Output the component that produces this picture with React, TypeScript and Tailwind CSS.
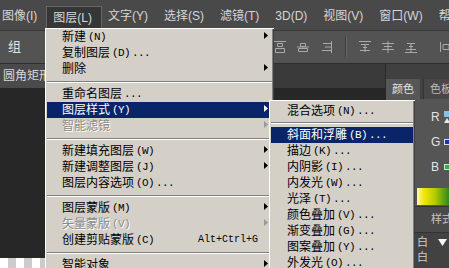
import React from 'react';

type Entry =
  | 'sep'
  | {
      label: string;
      hot?: string;
      dots?: boolean;
      arrow?: boolean;
      active?: boolean;
      disabled?: boolean;
      shortcut?: string;
    };

const layerMenu: Entry[] = [
  { label: '新建', hot: 'N', arrow: true },
  { label: '复制图层', hot: 'D', dots: true },
  { label: '删除', arrow: true },
  'sep',
  { label: '重命名图层', dots: true },
  { label: '图层样式', hot: 'Y', arrow: true, active: true },
  { label: '智能滤镜', arrow: true, disabled: true },
  'sep',
  { label: '新建填充图层', hot: 'W', arrow: true },
  { label: '新建调整图层', hot: 'J', arrow: true },
  { label: '图层内容选项', hot: 'O', dots: true },
  'sep',
  { label: '图层蒙版', hot: 'M', arrow: true },
  { label: '矢量蒙版', hot: 'V', arrow: true, disabled: true },
  { label: '创建剪贴蒙版', hot: 'C', shortcut: 'Alt+Ctrl+G' },
  'sep',
  { label: '智能对象', arrow: true },
];

const styleMenu: Entry[] = [
  { label: '混合选项', hot: 'N', dots: true },
  'sep',
  { label: '斜面和浮雕', hot: 'B', dots: true, active: true },
  { label: '描边', hot: 'K', dots: true },
  { label: '内阴影', hot: 'I', dots: true },
  { label: '内发光', hot: 'W', dots: true },
  { label: '光泽', hot: 'T', dots: true },
  { label: '颜色叠加', hot: 'V', dots: true },
  { label: '渐变叠加', hot: 'G', dots: true },
  { label: '图案叠加', hot: 'Y', dots: true },
  { label: '外发光', hot: 'O', dots: true },
];

const topMenu = ['图像(I)', '图层(L)', '文字(Y)', '选择(S)', '滤镜(T)', '3D(D)', '视图(V)', '窗口(W)', '帮助(H)'];

function Arrow({ fill }: { fill: string }) {
  return (
    <svg width="4" height="7" viewBox="0 0 4 7" className="absolute right-[4px] top-[3px]">
      <path d="M0 0L4 3.5L0 7Z" fill={fill} />
    </svg>
  );
}

function Row({ item, pad }: { item: Exclude<Entry, 'sep'>; pad: string }) {
  const tone = item.active
    ? 'bg-[#0a246a] text-white'
    : item.disabled
      ? 'text-[#8c8c8c] [text-shadow:1px_1px_0_#ffffff]'
      : 'text-black';
  const arrowFill = item.active ? '#ffffff' : item.disabled ? '#9a9a9a' : '#000000';
  return (
    <div className={`relative flex h-[16px] items-center whitespace-nowrap pr-[14px] ${pad} ${tone}`}>
      <span>{item.label}</span>
      {item.hot && (
        <span className="ml-[2px] font-['Liberation_Mono',monospace] text-[11px] tracking-[-0.6px]">
          ({item.hot})
        </span>
      )}
      {item.dots && (
        <span className="ml-[2px] font-['Liberation_Mono',monospace] text-[11px] tracking-[-0.6px]">...</span>
      )}
      {item.shortcut && (
        <span className="ml-auto font-['Liberation_Mono',monospace] text-[10px]">{item.shortcut}</span>
      )}
      {item.arrow && <Arrow fill={arrowFill} />}
    </div>
  );
}

function Separator({ h }: { h: string }) {
  return (
    <div className={`flex flex-col justify-center ${h}`}>
      <div className="h-px bg-[#808080]" />
      <div className="h-px bg-white" />
    </div>
  );
}

function Menu({ items, pad, sep, className }: { items: Entry[]; pad: string; sep: string; className: string }) {
  return (
    <div
      className={`absolute bg-[#d4d0c8] px-[2px] text-[12px] leading-none shadow-[inset_1px_1px_0_#ffffff,inset_-1px_-1px_0_#404040,inset_-2px_-2px_0_#808080] ${className}`}
    >
      {items.map((item, i) =>
        item === 'sep' ? <Separator key={i} h={sep} /> : <Row key={i} item={item} pad={pad} />,
      )}
    </div>
  );
}

function ToolIcon({ d }: { d: string }) {
  return (
    <svg width="14" height="14" viewBox="0 0 14 14" fill="none" stroke="#a9a9a9" strokeWidth="1">
      <path d={d} />
    </svg>
  );
}

export default function App() {
  return (
    <div className="relative h-[268px] w-[449px] overflow-hidden bg-[#272727] font-['Liberation_Sans','Noto_Sans_CJK_SC',sans-serif]">
      {/* menu bar */}
      <div className="flex h-[30px] items-center gap-4 overflow-hidden whitespace-nowrap bg-[#494949] pl-[2px] pt-[1px] text-[12px] text-[#d6d6d6]">
        {topMenu.map((m) =>
          m === '图层(L)' ? (
            <span
              key={m}
              className="-ml-[7px] -mr-[10px] mt-[4px] flex h-[24px] items-center border border-b-0 border-[#666666] bg-[#363636] pl-[6px] pr-[9px]"
            >
              {m}
            </span>
          ) : (
            <span key={m}>{m}</span>
          ),
        )}
      </div>

      {/* options bar */}
      <div className="flex h-[33px] items-center border-t border-[#383838] bg-[#535353] text-[#e2e2e2]">
        <span className="pl-[8px] text-[13px]">组</span>
        <div className="ml-[252px] flex items-center gap-[9px]">
          <ToolIcon d="M1 1.5h12M4.5 3.5h5v3h-5zM2.5 8.5h9v4h-9z" />
          <ToolIcon d="M1 7h12M4.5 3.5h5v3h-5zM2.5 8.5h9v3h-9z" />
          <ToolIcon d="M12.5 1v12M4 3.5h8M6 7h6M3 10.5h9" />
          <div className="mx-[3px] h-[20px] w-px bg-[#3a3a3a] shadow-[1px_0_0_#6a6a6a]" />
          <ToolIcon d="M1 1.5h12M3 4.5h8M5 7.5h4M2 10.5h10M7 4v8" />
          <ToolIcon d="M1 3.5h12M3 6.5h8M1 9.5h12M7 1v12" />
          <ToolIcon d="M1 12.5h12M3 3.5h8M5 6.5h4M2 9.5h10M7 3v9" />
          <div className="ml-[12px]">
            <ToolIcon d="M1.5 2v10M4 4.5h6v5H4z" />
          </div>
        </div>
      </div>

      {/* workspace */}
      <div className="flex h-[205px] border-t border-[#2e2e2e]">
        <div className="flex flex-1 flex-col">
          <div className="flex h-[24px] bg-[#3a3a3a]">
            <div className="flex w-[120px] items-center whitespace-nowrap bg-[#4a4a4a] pl-[3px] text-[12px] text-[#d8d8d8]">
              圆角矩形
            </div>
          </div>
          <div className="flex-1 bg-[#272727]" />
          <div className="h-[10px] bg-[repeating-linear-gradient(90deg,#ffffff_0_8px,#cccccc_8px_16px)]" />
        </div>

        {/* right dock */}
        <div className="flex w-[64px] flex-col overflow-hidden border-l border-[#2a2a2a] text-[#e4e4e4]">
          <div className="h-[15px] bg-[#404040]" />
          <div className="flex h-[20px] whitespace-nowrap bg-[#404040] text-[11px]">
            <div className="flex w-[34px] shrink-0 items-center justify-center bg-[#575757]">颜色</div>
            <div className="ml-[3px] flex min-w-0 flex-1 items-center overflow-hidden border-l border-[#333333] bg-[#474747] pl-[6px] text-[#bdbdbd]">
              色板
            </div>
          </div>
          <div className="flex h-[107px] flex-col bg-[#555555] pt-[5px] text-[12px]">
            <div className="flex h-[25px] items-center pl-[45px]">
              <span className="w-[13px] shrink-0">R</span>
              <svg width="6" height="14" viewBox="0 0 6 14" className="shrink-0">
                <rect x="0" y="1" width="6" height="6" fill="#86c0e6" />
                <path d="M0 13L3 8L6 13Z" fill="#e8e8e8" />
              </svg>
            </div>
            <div className="flex h-[25px] items-center pl-[45px]">
              <span className="w-[13px] shrink-0">G</span>
              <svg width="6" height="6" viewBox="0 0 6 6" className="shrink-0">
                <rect x="0.5" y="0.5" width="5.5" height="5" fill="#1b2fc8" stroke="#dddddd" />
              </svg>
            </div>
            <div className="flex h-[25px] items-center pl-[45px]">
              <span className="w-[13px] shrink-0">B</span>
              <svg width="6" height="6" viewBox="0 0 6 6" className="shrink-0">
                <rect x="0.5" y="0.5" width="5.5" height="5" fill="#2fb53a" stroke="#dddddd" />
              </svg>
            </div>
            <div className="ml-[31px] mt-[9px] h-[17px] bg-[linear-gradient(90deg,#fff7b0,#f2e600_22%,#b8cc00_55%,#2c8a1c)]" />
          </div>
          <div className="flex h-[27px] items-center overflow-hidden whitespace-nowrap border-y border-[#333333] bg-[#4a4a4a] pl-[45px] text-[11px] text-[#c4c4c4]">
            样式
          </div>
          <div className="flex flex-1 bg-[#424242]">
            <div className="ml-[31px] flex flex-col pt-[2px] text-[11px] leading-[15px] text-[#cfcfcf]">
              <span>白</span>
              <span>白</span>
            </div>
            <svg width="9" height="7" viewBox="0 0 9 7" className="ml-[10px] mt-[6px] shrink-0">
              <path d="M0 0H9L4.5 7Z" fill="#f4f4f4" />
            </svg>
          </div>
        </div>
      </div>

      <Menu items={layerMenu} pad="pl-[15px]" sep="h-[9px]" className="left-[45px] top-[28px] w-[229px] pt-[1px]" />
      <Menu items={styleMenu} pad="pl-[16px]" sep="h-[8px]" className="left-[269px] top-[100px] w-[146px] pt-[3px]" />
    </div>
  );
}
